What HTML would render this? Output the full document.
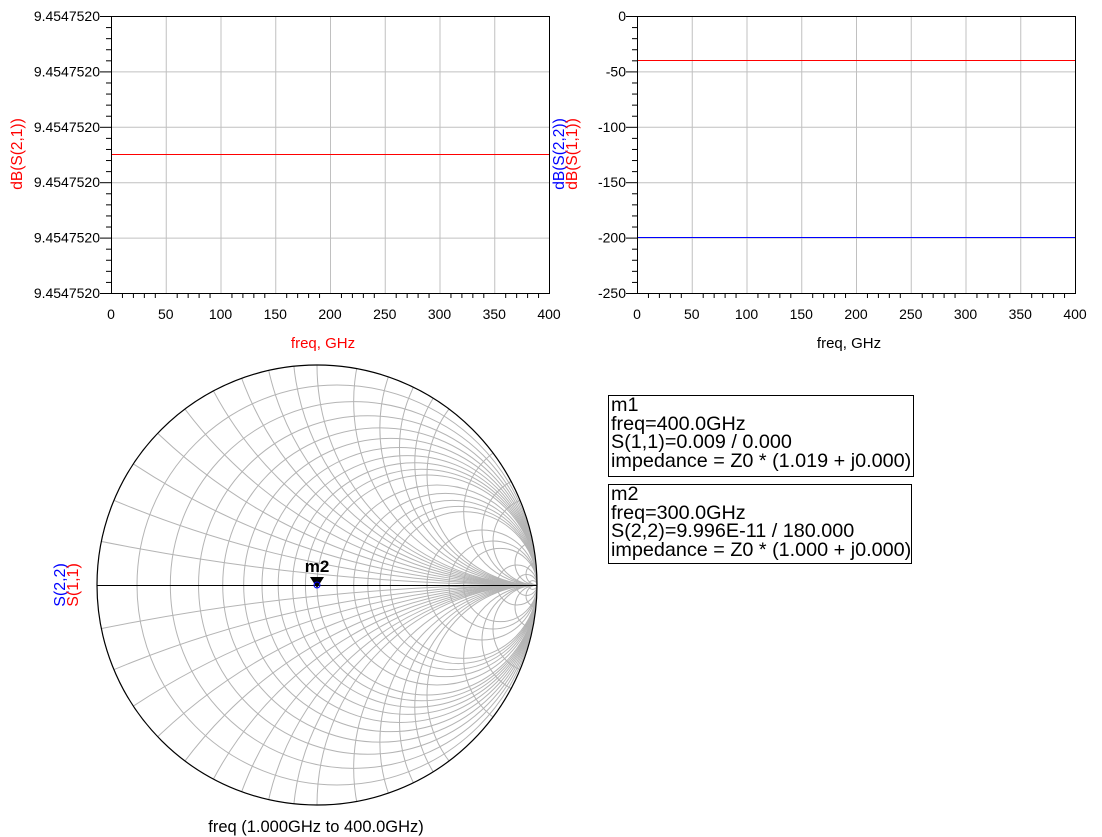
<!DOCTYPE html>
<html><head><meta charset="utf-8"><style>
html,body{margin:0;background:#fff;width:1102px;height:837px;overflow:hidden;font-family:"Liberation Sans",Arial,sans-serif;}
svg{position:absolute;left:0;top:0}
.mk{position:absolute;border:1px solid #000;font-size:19.8px;line-height:18.7px;padding:0 2px;white-space:nowrap;color:#000;box-sizing:border-box;overflow:hidden}
</style></head><body>
<svg id="s" width="1102" height="837" xmlns="http://www.w3.org/2000/svg" font-family="Liberation Sans, Arial, sans-serif"></svg>
<div class="mk" style="left:608px;top:395px;width:306px;height:82px">m1<br>freq=400.0GHz<br>S(1,1)=0.009 / 0.000<br>impedance = Z0 * (1.019 + j0.000)</div>
<div class="mk" style="left:608px;top:484px;width:304px;height:80px">m2<br>freq=300.0GHz<br>S(2,2)=9.996E-11 / 180.000<br>impedance = Z0 * (1.000 + j0.000)</div>
<script>
var s='';
function L(x1,y1,x2,y2,c,w){s+='<line x1="'+x1+'" y1="'+y1+'" x2="'+x2+'" y2="'+y2+'" stroke="'+c+'" stroke-width="'+(w||1)+'"/>';}
function T(x,y,t,c,a,sz,extra){s+='<text x="'+x+'" y="'+y+'" fill="'+(c||'#000')+'" font-size="'+(sz||13)+'" text-anchor="'+(a||'middle')+'" '+(extra||'')+'>'+t+'</text>';}
function plot(x0,ylab,lines,xlabColor){
  var x1=x0+438,y0=16,y1=293;
  for(var i=1;i<8;i++){var x=x0+i*438/8+.5;L(x,y0,x,y1,'#c0c0c0');}
  for(var j=1;j<5;j++){var y=y0+j*277/5+.5;L(x0,y,x1,y,'#c0c0c0');}
  lines.forEach(function(l){L(x0,l[0]+.5,x1,l[0]+.5,l[1]);});
  s+='<rect x="'+(x0+.5)+'" y="'+(y0+.5)+'" width="438" height="277" fill="none" stroke="#000"/>';
  for(var k=0;k<=25;k++){var y=y0+k*277/25+.5;L(k%5==0?x0-11:x0-5,y,x0,y,'#000');}
  for(var k=0;k<=40;k++){var x=x0+k*438/40+.5;L(x,y1,x,y1+(k%5==0?0:5),'#000');}
  for(var j=0;j<=5;j++)T(x0-11,y0+j*277/5+5,ylab[j],'#000','end',14);
  for(var i=0;i<=8;i++)T(x0+i*438/8,319,i*50,'#000','middle',14);
  T(x0+212,348,'freq, GHz',xlabColor,'middle',15);
}
var n='9.4547520';
plot(111,[n,n,n,n,n,n],[[154,'#ff0000']],'#ff0000');
plot(637,['0','-50','-100','-150','-200','-250'],[[60,'#ff0000'],[237,'#0000ff']],'#000');
s+='<text transform="translate(22,154) rotate(-90)" fill="#ff0000" font-size="15.5" text-anchor="middle">dB(S(2,1))</text>';
s+='<text transform="translate(564,154) rotate(-90)" fill="#0000ff" font-size="15.5" text-anchor="middle">dB(S(2,2))</text>';
s+='<text transform="translate(577,154) rotate(-90)" fill="#ff0000" font-size="15.5" text-anchor="middle">dB(S(1,1))</text>';
var cx=317,cy=585,R=220;
s+='<defs><clipPath id="cp"><circle cx="'+cx+'" cy="'+cy+'" r="'+R+'"/></clipPath></defs><g clip-path="url(#cp)" fill="none" stroke="#b4b4b4" stroke-width="1">';
var rv=[0.1,0.2,0.3,0.4,0.5,0.6,0.7,0.8,0.9,1,1.2,1.4,1.6,1.8,2,3,4,5,10,20,50];
var xv=[0.1,0.2,0.3,0.4,0.5,0.6,0.7,0.8,0.9,1,1.2,1.4,1.6,1.8,2,3,4,5,10,20];
rv.forEach(function(r){var c=r/(1+r),rr=1/(1+r);s+='<circle cx="'+(cx+c*R)+'" cy="'+cy+'" r="'+(rr*R)+'"/>';});
xv.forEach(function(x){var rr=1/x;s+='<circle cx="'+(cx+R)+'" cy="'+(cy-rr*R)+'" r="'+(rr*R)+'"/><circle cx="'+(cx+R)+'" cy="'+(cy+rr*R)+'" r="'+(rr*R)+'"/>';});
s+='</g>';
L(cx-R,cy+.5,cx+R,cy+.5,'#000');
s+='<circle cx="'+cx+'" cy="'+cy+'" r="'+R+'" fill="none" stroke="#000" stroke-width="1.2"/>';
s+='<polygon points="310,577 324,577 317,588" fill="#000"/>';
s+='<circle cx="317" cy="585" r="3" fill="none" stroke="#0000ff"/>';
T(317,572,'m2','#000','middle',17,'font-weight="bold"');
s+='<text transform="translate(65,585) rotate(-90)" fill="#0000ff" font-size="16" text-anchor="middle">S(2,2)</text>';
s+='<text transform="translate(78,585) rotate(-90)" fill="#ff0000" font-size="16" text-anchor="middle">S(1,1)</text>';
T(316,832,'freq (1.000GHz to 400.0GHz)','#000','middle',16.5);
document.getElementById('s').innerHTML=s;
</script>
</body></html>
